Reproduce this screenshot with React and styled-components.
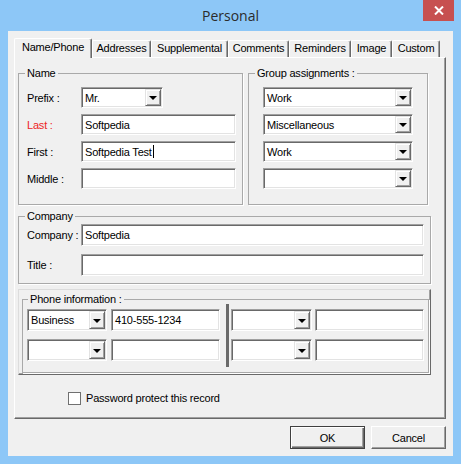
import React from "react";
import styled, { createGlobalStyle } from "styled-components";

const GlobalStyle = createGlobalStyle`
  html, body {
    margin: 0;
    padding: 0;
    background: #8dc7f7;
  }
  body {
    font-family: "Liberation Sans", Arial, sans-serif;
    font-size: 11px;
    letter-spacing: -0.2px;
    color: #000;
  }
  * { box-sizing: border-box; }
`;

// window chrome
const Window = styled.div`
  width: 461px;
  height: 464px;
  background: #8dc7f7;
  display: flex;
  flex-direction: column;
  padding: 0 8px 8px;
`;

const TitleBar = styled.div`
  height: 31px;
  display: grid;
  grid-template-columns: 1fr auto 1fr;
  align-items: start;
`;

const Title = styled.div`
  grid-column: 2;
  font-family: "Open Sans", "Noto Sans", sans-serif;
  font-size: 14px;
  letter-spacing: 0;
  line-height: 31px;
  color: #2b2b2b;
`;

const CloseButton = styled.div`
  grid-column: 3;
  justify-self: end;
  margin-right: -1px;
  width: 31px;
  height: 21px;
  background: #c75050;
  display: flex;
  align-items: center;
  justify-content: center;
`;

const Client = styled.div`
  flex: 1;
  background: #f0f0f0;
  padding: 7px 7px 0 6px;
  display: flex;
  flex-direction: column;
`;

// tabs
const TabStrip = styled.div`
  display: flex;
  align-items: flex-start;
  height: 19px;
`;

const Tab = styled.div`
  width: ${(p) => p.$w}px;
  height: ${(p) => (p.$active ? 20 : 17)}px;
  margin-top: ${(p) => (p.$active ? 0 : 2)}px;
  position: relative;
  z-index: ${(p) => (p.$active ? 2 : 1)};
  background: #f0f0f0;
  border: 1px solid #fff;
  border-bottom: none;
  border-right-color: #696969;
  box-shadow: inset -1px 0 0 #a0a0a0;
  border-radius: 2px 2px 0 0;
  text-align: center;
  line-height: ${(p) => (p.$active ? 17 : 15)}px;
  white-space: nowrap;
`;

const Panel = styled.div`
  width: 432px;
  height: 362px;
  border: 1px solid #fff;
  border-right-color: #696969;
  border-bottom-color: #696969;
  box-shadow: inset -1px -1px 0 #a0a0a0;
  padding: 8px 0 0 3px;
`;

// group boxes
const TopRow = styled.div`
  display: flex;
  gap: 5px;
  margin-top: 7px;
`;

const GroupBox = styled.div`
  width: ${(p) => p.$w}px;
  height: ${(p) => (p.$h ? `${p.$h}px` : "auto")};
  border: 1px solid #a9a9a9;
  box-shadow: 1px 1px 0 #fff;
  padding: ${(p) => p.$pad || "0"};
  margin: ${(p) => p.$m || "0"};
`;

const Caption = styled.div`
  display: table;
  margin: -7px 0 0 ${(p) => p.$ml ?? 6}px;
  padding: 0 2px;
  line-height: 13px;
  background: #f0f0f0;
  white-space: nowrap;
`;

const FormGrid = styled.div`
  display: grid;
  grid-template-columns: 54px 1fr;
  grid-auto-rows: ${(p) => p.$rh}px;
  row-gap: ${(p) => p.$gap}px;
  align-items: center;
  margin-top: ${(p) => p.$mt}px;
`;

const Label = styled.div`
  color: ${(p) => (p.$required ? "#ee2424" : "#000")};
  white-space: nowrap;
`;

const Field = styled.div`
  width: ${(p) => (p.$w ? `${p.$w}px` : "100%")};
  height: ${(p) => p.$h || 21}px;
  background: #fff;
  border: 1px solid;
  border-color: #a0a0a0 #fff #fff #a0a0a0;
  box-shadow: inset 1px 1px 0 #696969, inset -1px -1px 0 #e3e3e3;
  padding: 3px 3px 0;
  line-height: 14px;
  white-space: nowrap;
  overflow: hidden;
`;

const Caret = styled.span`
  display: inline-block;
  width: 1px;
  height: 13px;
  background: #000;
  vertical-align: -2px;
  margin-left: 1px;
`;

const ComboBox = styled.div`
  width: ${(p) => (p.$w ? `${p.$w}px` : "100%")};
  height: ${(p) => p.$h || 21}px;
  background: #fff;
  border: 1px solid;
  border-color: #a0a0a0 #fff #fff #a0a0a0;
  box-shadow: inset 1px 1px 0 #696969, inset -1px -1px 0 #e3e3e3;
  padding: 1px;
  display: flex;
  align-items: stretch;
`;

const ComboText = styled.div`
  flex: 1;
  padding: 2px 0 0 2px;
  line-height: 14px;
  white-space: nowrap;
`;

const ArrowButton = styled.div`
  width: 16px;
  background: #f0f0f0;
  border: 1px solid;
  border-color: #e3e3e3 #696969 #696969 #e3e3e3;
  box-shadow: inset 1px 1px 0 #fff, inset -1px -1px 0 #a0a0a0;
  display: flex;
  align-items: center;
  justify-content: center;

  &::after {
    content: "";
    border-left: 4px solid transparent;
    border-right: 4px solid transparent;
    border-top: 4px solid #000;
    margin-top: 1px;
  }
`;

const ComboStack = styled.div`
  display: flex;
  flex-direction: column;
  gap: 6px;
  padding: 7px 0 0 14px;
`;

// phone section
const PhoneFrame = styled.div`
  width: 413px;
  height: 86px;
  margin-top: 5px;
  border: 1px solid;
  border-color: #dcdcdc #696969 #696969 #dcdcdc;
  box-shadow: inset -1px -1px 0 #a0a0a0;
  padding: 9px 0 0 3px;
`;

const PhoneRow = styled.div`
  display: flex;
  align-items: flex-start;
  margin-top: -2px;
  padding-left: 4px;
`;

const PhoneCol = styled.div`
  display: grid;
  grid-template-columns: ${(p) => p.$combo}px 109px;
  grid-auto-rows: 22px;
  column-gap: ${(p) => p.$gap}px;
  row-gap: 8px;
  padding-top: 5px;
`;

const Divider = styled.div`
  width: 3px;
  height: 63px;
  margin: 0 2px 0 6px;
  background: #6a6a6a;
`;

const CheckRow = styled.label`
  display: flex;
  align-items: center;
  gap: 5px;
  margin: 17px 0 0 50px;
  line-height: 13px;
`;

const CheckBox = styled.span`
  width: 13px;
  height: 13px;
  background: #fff;
  border: 1px solid #707070;
`;

const ButtonRow = styled.div`
  display: flex;
  justify-content: flex-end;
  gap: 6px;
  margin-top: 7px;
`;

const Button = styled.div`
  width: 75px;
  height: 23px;
  display: flex;
  align-items: center;
  justify-content: center;
  background: #f0f0f0;
  border: 1px solid;
  border-color: ${(p) => (p.$default ? "#404040" : "#fff #696969 #696969 #fff")};
  box-shadow: ${(p) =>
    p.$default
      ? "inset 1px 1px 0 #fff, inset -1px -1px 0 #696969, inset -2px -2px 0 #a0a0a0"
      : "inset -1px -1px 0 #a0a0a0"};
`;

const tabs = [
  ["Name/Phone", 78],
  ["Addresses", 59],
  ["Supplemental", 77],
  ["Comments", 61],
  ["Reminders", 62],
  ["Image", 41],
  ["Custom", 48],
];

const Combo = ({ text, w, h }) => (
  <ComboBox $w={w} $h={h}>
    <ComboText>{text}</ComboText>
    <ArrowButton />
  </ComboBox>
);

export default function App() {
  return (
    <>
      <GlobalStyle />
      <Window>
        <TitleBar>
          <Title>Personal</Title>
          <CloseButton>
            <svg width="10" height="9" viewBox="0 0 10 9">
              <path d="M1 0.5 L9 8.5 M9 0.5 L1 8.5" stroke="#fff" strokeWidth="2" />
            </svg>
          </CloseButton>
        </TitleBar>
        <Client>
          <TabStrip>
            {tabs.map(([t, w], i) => (
              <Tab key={t} $w={w} $active={i === 0}>
                {t}
              </Tab>
            ))}
          </TabStrip>
          <Panel>
            <TopRow>
              <GroupBox $w={225} $h={132} $pad="0 6px 0 8px">
                <Caption $ml={-2}>Name</Caption>
                <FormGrid $rh={21} $gap={6} $mt={7}>
                  <Label>Prefix :</Label>
                  <Combo text="Mr." w={82} />
                  <Label $required>Last :</Label>
                  <Field>Softpedia</Field>
                  <Label>First :</Label>
                  <Field>
                    Softpedia Test
                    <Caret />
                  </Field>
                  <Label>Middle :</Label>
                  <Field />
                </FormGrid>
              </GroupBox>
              <GroupBox $w={180} $h={132}>
                <Caption $ml={6}>Group assignments :</Caption>
                <ComboStack>
                  <Combo text="Work" w={150} />
                  <Combo text="Miscellaneous" w={150} />
                  <Combo text="Work" w={150} />
                  <Combo text="" w={150} />
                </ComboStack>
              </GroupBox>
            </TopRow>
            <GroupBox $w={413} $h={68} $pad="0 6px 0 8px" $m="11px 0 0">
              <Caption $ml={-2}>Company</Caption>
              <FormGrid $rh={22} $gap={8} $mt={1}>
                <Label>Company :</Label>
                <Field $h={22}>Softpedia</Field>
                <Label>Title :</Label>
                <Field $h={22} />
              </FormGrid>
            </GroupBox>
            <PhoneFrame>
              <GroupBox $w={407} $h={74}>
                <Caption $ml={5}>Phone information :</Caption>
                <PhoneRow>
                  <PhoneCol $combo={80} $gap={4}>
                    <Combo text="Business" w={80} h={22} />
                    <Field $h={22}>410-555-1234</Field>
                    <Combo text="" w={80} h={22} />
                    <Field $h={22} />
                  </PhoneCol>
                  <Divider />
                  <PhoneCol $combo={81} $gap={3}>
                    <Combo text="" w={81} h={22} />
                    <Field $h={22} />
                    <Combo text="" w={81} h={22} />
                    <Field $h={22} />
                  </PhoneCol>
                </PhoneRow>
              </GroupBox>
            </PhoneFrame>
            <CheckRow>
              <CheckBox />
              Password protect this record
            </CheckRow>
          </Panel>
          <ButtonRow>
            <Button $default>OK</Button>
            <Button>Cancel</Button>
          </ButtonRow>
        </Client>
      </Window>
    </>
  );
}
